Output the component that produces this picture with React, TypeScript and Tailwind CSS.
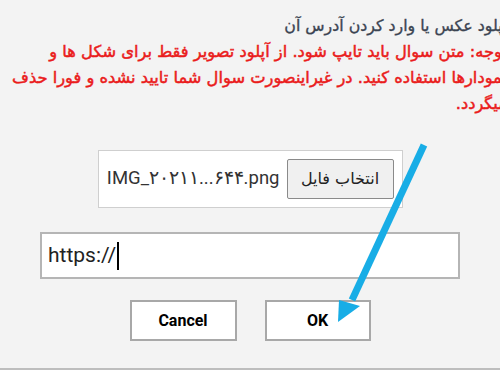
export default function App() {
  return (
    <div className="relative w-[500px] h-[370px] overflow-hidden bg-[#f3f3f3] border-b-2 border-[#bdbdbd] font-['DejaVu_Sans',sans-serif]">
      <div dir="rtl" className="w-[507px] pt-[13px] whitespace-nowrap text-right">
        <p className="text-[15.8px] leading-[26px] text-[#3b4452] [-webkit-text-stroke:0.35px_#3b4452]">آپلود عکس یا وارد کردن آدرس آن</p>
        <p className="text-[16.3px] leading-[26px] text-[#ea1c1c] [-webkit-text-stroke:0.5px_#ea1c1c]">
          توجه: متن سوال باید تایپ شود. از آپلود تصویر فقط برای شکل ها و
          <br />
          نمودارها استفاده کنید. در غیراینصورت سوال شما تایید نشده و فورا حذف
          <br />
          میگردد.
        </p>
      </div>

      <div className="flex justify-center mt-[33px]">
        <div dir="rtl" className="w-[305px] h-[58px] bg-white border border-[#cfcfcf] flex items-center gap-[7px] px-[8px]">
          <button className="h-[40px] w-[107px] shrink-0 whitespace-nowrap bg-[#f0f0f0] border border-[#8a8a8a] rounded-[2px] text-[16px] text-[#222]">
            انتخاب فایل
          </button>
          <span dir="ltr" className="whitespace-nowrap text-[18.5px] text-[#333] font-['Roboto',sans-serif]">IMG_۲۰۲۱۱...۶۴۴.png</span>
        </div>
      </div>

      <div className="flex justify-center mt-[24px]">
        <div className="w-[420px] h-[47px] bg-white border-2 border-[#b5b5b5] flex items-center px-[6px]">
          <span className="text-[21px] text-[#222] font-['Roboto',sans-serif]">https://</span>
          <span className="w-[1.5px] h-[28px] bg-black ml-[1px]" />
        </div>
      </div>

      <div className="flex justify-center gap-[28px] mt-[21px] font-['Roboto',sans-serif]">
        <button className="w-[107px] h-[41px] bg-white border-2 border-[#a8a8a8] text-[16px] font-bold text-black">
          Cancel
        </button>
        <button className="w-[106px] h-[41px] bg-white border-2 border-[#a8a8a8] text-[16px] font-bold text-black">
          OK
        </button>
      </div>

      <svg className="absolute left-0 top-0 pointer-events-none" width="500" height="370" viewBox="0 0 500 370">
        <line x1="424" y1="145" x2="352" y2="300" stroke="#18ade6" strokeWidth="7" strokeLinecap="butt" />
        <polygon points="338,322 339,300 360,306" fill="#18ade6" />
      </svg>
    </div>
  );
}
